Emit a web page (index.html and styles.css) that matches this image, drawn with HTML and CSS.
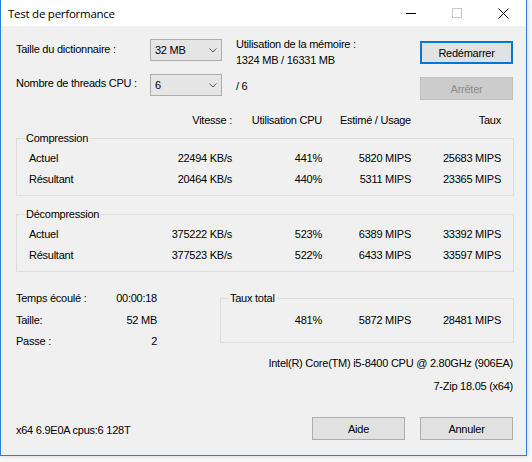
FILE: index.html
```html
<!DOCTYPE html>
<html lang="fr">
<head>
<meta charset="utf-8">
<title>Test de performance</title>
<link rel="stylesheet" href="styles.css">
</head>
<body>
<div class="window">
  <div class="titlebar">
    <span class="title">Test de performance</span>
    <div class="caption">
      <span class="cbtn"><svg width="10" height="10" viewBox="0 0 10 10"><path d="M0 5.5H10" stroke="#000" stroke-width="1"/></svg></span>
      <span class="cbtn"><svg width="10" height="10" viewBox="0 0 10 10"><rect x="0.5" y="0.5" width="9" height="9" fill="none" stroke="#c8c8c8" stroke-width="1"/></svg></span>
      <span class="cbtn"><svg width="11" height="11" viewBox="0 0 11 11"><path d="M0.5 0.5L10.5 10.5M10.5 0.5L0.5 10.5" stroke="#000" stroke-width="1"/></svg></span>
    </div>
  </div>

  <div class="content">
    <div class="settings">
      <span class="lbl l1">Taille du dictionnaire :</span>
      <div class="combo c1"><span>32 MB</span><svg class="chev" width="8" height="5" viewBox="0 0 8 5"><path d="M0.5 0.5L4 4L7.5 0.5" fill="none" stroke="#555" stroke-width="1"/></svg></div>
      <div class="mem">Utilisation de la mémoire :<br>1324 MB / 16331 MB</div>
      <button class="btn default b1">Redémarrer</button>

      <span class="lbl l2">Nombre de threads CPU :</span>
      <div class="combo c2"><span>6</span><svg class="chev" width="8" height="5" viewBox="0 0 8 5"><path d="M0.5 0.5L4 4L7.5 0.5" fill="none" stroke="#555" stroke-width="1"/></svg></div>
      <div class="threads">/ 6</div>
      <button class="btn disabled b2">Arrêter</button>
    </div>

    <div class="cols head">
      <span></span>
      <span>Vitesse :</span>
      <span>Utilisation CPU</span>
      <span>Estimé / Usage</span>
      <span>Taux</span>
    </div>

    <div class="group g-comp">
      <div class="gtitle">Compression</div>
      <div class="rows">
        <div class="cols">
          <span>Actuel</span><span>22494 KB/s</span><span>441%</span><span>5820 MIPS</span><span>25683 MIPS</span>
        </div>
        <div class="cols">
          <span>Résultant</span><span>20464 KB/s</span><span>440%</span><span>5311 MIPS</span><span>23365 MIPS</span>
        </div>
      </div>
    </div>

    <div class="group g-decomp">
      <div class="gtitle">Décompression</div>
      <div class="rows">
        <div class="cols">
          <span>Actuel</span><span>375222 KB/s</span><span>523%</span><span>6389 MIPS</span><span>33392 MIPS</span>
        </div>
        <div class="cols">
          <span>Résultant</span><span>377523 KB/s</span><span>522%</span><span>6433 MIPS</span><span>33597 MIPS</span>
        </div>
      </div>
    </div>

    <div class="bottom">
      <div class="stats">
        <span>Temps écoulé :</span><span class="v">00:00:18</span>
        <span>Taille:</span><span class="v">52 MB</span>
        <span>Passe :</span><span class="v">2</span>
      </div>
      <div class="right">
        <div class="group g-total">
          <div class="gtitle">Taux total</div>
          <div class="total">
            <span></span><span>481%</span><span>5872 MIPS</span><span>28481 MIPS</span>
          </div>
        </div>
        <div class="info cpu">Intel(R) Core(TM) i5-8400 CPU @ 2.80GHz (906EA)</div>
        <div class="info ver">7-Zip 18.05 (x64)</div>
      </div>
    </div>

    <div class="footer">
      <span class="sys">x64 6.9E0A cpus:6 128T</span>
      <div class="actions">
        <button class="btn">Aide</button>
        <button class="btn">Annuler</button>
      </div>
    </div>
  </div>
</div>
</body>
</html>
```

FILE: styles.css
```css
* { box-sizing: border-box; }

html, body {
  margin: 0;
  padding: 0;
}

body {
  width: 532px;
  height: 462px;
  overflow: hidden;
  background: #f8f8f8;
  font-family: "Liberation Sans", Arial, sans-serif;
  font-size: 11px;
  letter-spacing: -0.25px;
  color: #000;
}

.window {
  width: 527px;
  height: 456px;
  background: #f0f0f0;
  border: 1px solid #2b7fd8;
  border-top: 0;
  box-shadow: 0 0 5px rgba(0, 0, 0, 0.16);
}

.titlebar {
  height: 26px;
  background: #fff;
  display: flex;
  align-items: center;
  padding-left: 7px;
}

.title {
  flex: 1;
  font-family: "Open Sans", "Noto Sans", sans-serif;
  font-size: 11.5px;
  letter-spacing: -0.25px;
}

.caption {
  display: flex;
  height: 26px;
}

.cbtn {
  width: 46px;
  display: flex;
  align-items: center;
  justify-content: center;
}

.content {
  padding: 10px 12px 0 15px;
}

/* top settings */
.settings {
  display: grid;
  grid-template-columns: 134px 72px 1fr 93px;
  grid-template-rows: 36px 28px;
  align-items: start;
  margin-right: 1px;
}

.lbl { line-height: 14px; }
.l1 { margin-top: 6px; }
.l2 { margin-top: 4px; }

.combo {
  height: 22px;
  border: 1px solid #adadad;
  background: #e5e5e5;
  display: flex;
  align-items: center;
  justify-content: space-between;
  padding: 0 4px 0 4px;
}
.c1 { margin-top: 3px; }
.c2 { margin-top: 2px; }
.chev { display: block; }

.mem {
  line-height: 16px;
  padding-left: 14px;
}

.threads {
  line-height: 14px;
  margin-top: 7px;
  padding-left: 14px;
}

.btn {
  width: 93px;
  height: 23px;
  padding: 0;
  border: 1px solid #adadad;
  background: #e1e1e1;
  font-family: "Liberation Sans", Arial, sans-serif;
  font-size: 11px;
  letter-spacing: -0.25px;
  color: #000;
}
.btn.default {
  border: 2px solid #0078d7;
}
.btn.disabled {
  background: #cccccc;
  border-color: #bfbfbf;
  color: #8a8a8a;
}
.b1, .b2 { margin-top: 5px; }

/* table columns */
.cols {
  display: grid;
  grid-template-columns: 100px 103px 90px 89px 90px;
  padding: 0 12px;
  line-height: 21px;
}
.cols span { text-align: right; }
.cols span:first-child { text-align: left; }

.head {
  margin-top: 13px;
  padding: 0 13px;
  line-height: 14px;
}

.group {
  border: 1px solid #dcdcdc;
}

.gtitle {
  width: max-content;
  margin: -8px 0 0 8px;
  padding: 0 1px;
  line-height: 14px;
  background: #f0f0f0;
}

.g-comp {
  margin-top: 11px;
  padding-bottom: 5px;
}
.g-decomp {
  margin-top: 18px;
  padding-bottom: 5px;
}
.rows { margin-top: 3px; }

/* bottom area */
.bottom {
  display: flex;
  margin-top: 16px;
}

.stats {
  width: 204px;
  display: grid;
  grid-template-columns: 80px 61px;
  align-content: start;
  line-height: 21.5px;
}
.stats .v { text-align: right; }

.right {
  flex: 1;
  display: flex;
  flex-direction: column;
}

.g-total {
  margin-top: 10px;
  padding-bottom: 15px;
}

.total {
  display: grid;
  grid-template-columns: 1fr 90px 89px 90px;
  padding-right: 12px;
  margin-top: 8px;
  line-height: 14px;
}
.total span { text-align: right; }

.info {
  text-align: right;
  line-height: 14px;
  padding-right: 1px;
}
.cpu { margin-top: 13px; }
.ver { margin-top: 9px; }

.footer {
  display: flex;
  align-items: center;
  justify-content: space-between;
  margin-top: 24px;
}

.sys {
  line-height: 14px;
  margin-top: 2px;
}

.actions {
  display: flex;
  gap: 15px;
  margin-right: 1px;
}
```
